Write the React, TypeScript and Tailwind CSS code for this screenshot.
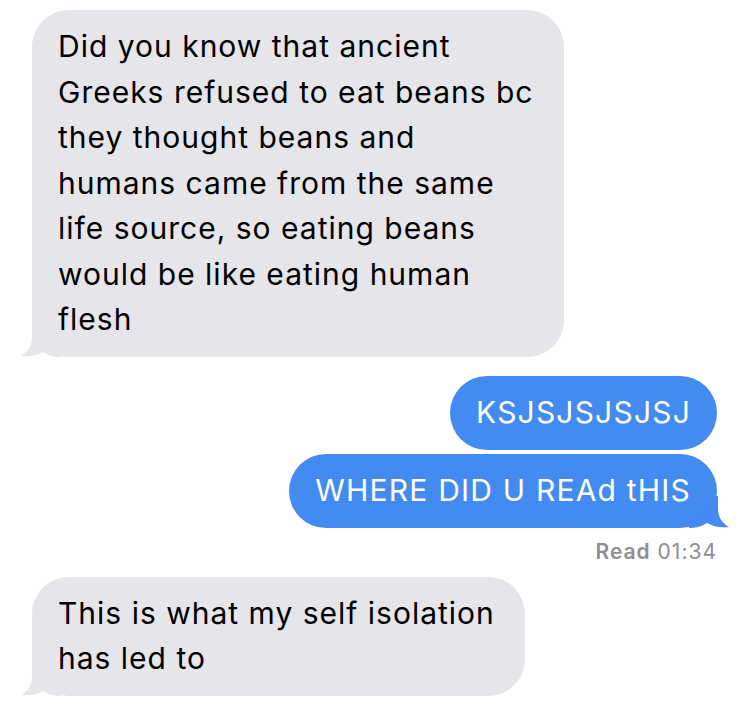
const font = { fontFamily: 'Inter, "Liberation Sans", sans-serif' }

function Tail({ side, color }: { side: 'left' | 'right'; color: string }) {
  return (
    <svg
      width="40"
      height="32"
      viewBox="0 0 40 32"
      className={side === 'left' ? 'absolute -left-[11px] bottom-0' : 'absolute -right-[12px] bottom-0 -scale-x-100'}
    >
      <path
        d="M11 0 L11 12 C11 21 7 27 0 31 C8 32 16 30.5 22 27 C28 31 34 32 40 32 L40 0 Z"
        fill={color}
      />
    </svg>
  )
}

function Incoming({ lines, tail }: { lines: string[]; tail?: boolean }) {
  return (
    <div className="relative self-start">
      <div className="relative z-10 rounded-[37px] bg-[#e5e5ea] pl-[26px] pr-[30px] py-[14px] text-[30px] leading-[45.5px] tracking-[1px] text-black">
        {lines.map((l) => (
          <div key={l} className="whitespace-nowrap">{l}</div>
        ))}
      </div>
      {tail && <Tail side="left" color="#e5e5ea" />}
    </div>
  )
}

function Outgoing({ text, tail }: { text: string; tail?: boolean }) {
  return (
    <div className="relative self-end">
      <div className="relative z-10 rounded-[37px] bg-[#438bf1] px-[26px] h-[74px] flex items-center text-[30px] tracking-[1.2px] text-white whitespace-nowrap">
        {text}
      </div>
      {tail && <Tail side="right" color="#438bf1" />}
    </div>
  )
}

export default function App() {
  return (
    <div className="w-[749px] h-[712px] bg-white overflow-hidden" style={font}>
      <div className="flex flex-col px-8 pt-[10px]">
        <Incoming
          tail
          lines={[
            'Did you know that ancient',
            'Greeks refused to eat beans bc',
            'they thought beans and',
            'humans came from the same',
            'life source, so eating beans',
            'would be like eating human',
            'flesh',
          ]}
        />
        <div className="mt-[19px] flex flex-col gap-1">
          <Outgoing text="KSJSJSJSJSJ" />
          <Outgoing text="WHERE DID U REAd tHIS" tail />
        </div>
        <div className="self-end mt-[10px] text-[21px] leading-[28px] tracking-[1px] text-[#8e8e93]">
          <span className="font-semibold">Read</span> 01:34
        </div>
        <div className="mt-[11px] flex flex-col">
          <Incoming tail lines={['This is what my self isolation', 'has led to']} />
        </div>
      </div>
    </div>
  )
}
